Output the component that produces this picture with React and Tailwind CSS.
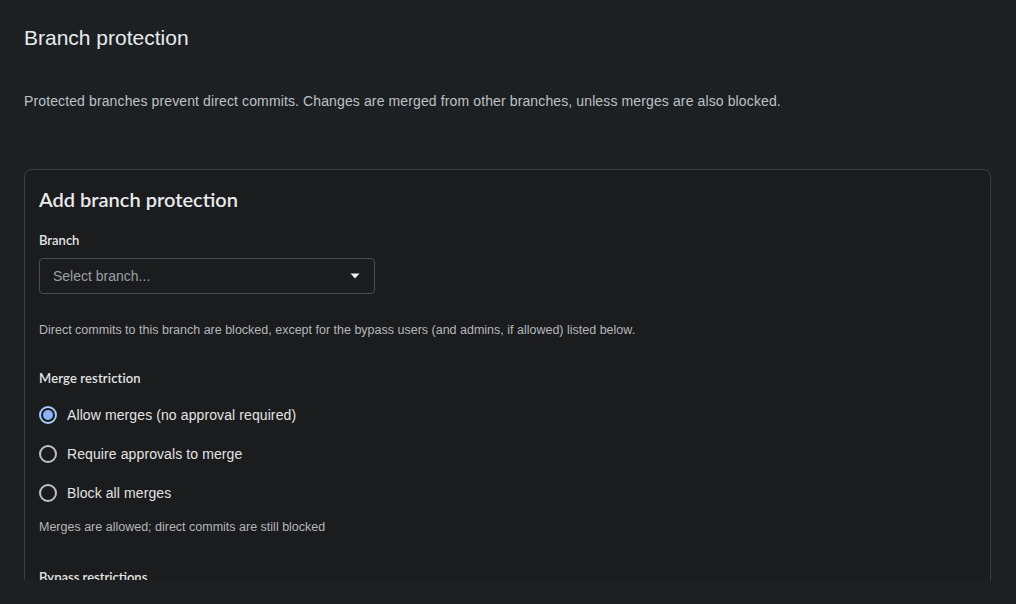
import React from "react";

function Radio({ checked, label }) {
  return (
    <div className="flex items-center h-[24px]">
      {checked ? (
        <span className="w-[18px] h-[18px] rounded-full border-2 border-[#a8c7fa] flex items-center justify-center">
          <span className="w-[10px] h-[10px] rounded-full bg-[#8ab4f8]" />
        </span>
      ) : (
        <span className="w-[18px] h-[18px] rounded-full border-2 border-[#bfc1c4]" />
      )}
      <span className="ml-[10px] text-[14px] leading-[20px] tracking-[0.1px] text-[#e3e3e3] font-['Liberation_Sans',Arial,sans-serif]">
        {label}
      </span>
    </div>
  );
}

export default function App() {
  return (
    <div className="h-[604px] w-full bg-[#1d2023] overflow-hidden">
      <div className="h-[580px] overflow-hidden px-6 pt-[26px]">
        <h1 className="text-[21px] leading-[24px] text-[#e8eaed] font-['Liberation_Sans',Arial,sans-serif]">
          Branch protection
        </h1>
        <p className="mt-[41px] text-[14px] leading-[20px] tracking-[0.12px] text-[#bdc1c6] font-['Liberation_Sans',Arial,sans-serif]">
          Protected branches prevent direct commits. Changes are merged from other branches, unless merges are also blocked.
        </p>
        <div className="mt-[58px] mr-[1px] border border-[#3c3d40] rounded-lg bg-[#1b1c1e] px-[14px] pt-[15px] pb-10">
          <h2 className="text-[20px] leading-[28px] font-semibold text-[#e8eaed] font-['Lato','Open_Sans',sans-serif]">
            Add branch protection
          </h2>
          <div className="mt-[18px] text-[13px] leading-[18px] font-semibold text-[#e3e3e3] font-['Lato','Open_Sans',sans-serif]">
            Branch
          </div>
          <div className="mt-[9px] w-[336px] h-[36px] border border-[#4a4b4e] rounded-[4px] flex items-center justify-between pl-[13px] pr-[14px]">
            <span className="text-[14px] text-[#9aa0a6] font-['Liberation_Sans',Arial,sans-serif]">Select branch...</span>
            <svg width="10" height="6" viewBox="0 0 10 6">
              <path d="M0.5 0.5 L9.5 0.5 L5 5.5 Z" fill="#f1f3f4" />
            </svg>
          </div>
          <p className="mt-[28px] text-[12.5px] leading-[16px] text-[#b4b7bb] font-['Liberation_Sans',Arial,sans-serif]">
            Direct commits to this branch are blocked, except for the bypass users (and admins, if allowed) listed below.
          </p>
          <div className="mt-[31px] text-[13px] leading-[18px] tracking-[0.15px] font-semibold text-[#e3e3e3] font-['Lato','Open_Sans',sans-serif]">
            Merge restriction
          </div>
          <div className="mt-[16px] flex flex-col gap-[15px]">
            <Radio checked label="Allow merges (no approval required)" />
            <Radio label="Require approvals to merge" />
            <Radio label="Block all merges" />
          </div>
          <p className="mt-[14px] text-[12.5px] leading-[16px] text-[#b4b7bb] font-['Liberation_Sans',Arial,sans-serif]">
            Merges are allowed; direct commits are still blocked
          </p>
          <div className="mt-[33px] text-[13px] leading-[18px] font-semibold text-[#e3e3e3] font-['Lato','Open_Sans',sans-serif]">
            Bypass restrictions
          </div>
        </div>
      </div>
    </div>
  );
}
